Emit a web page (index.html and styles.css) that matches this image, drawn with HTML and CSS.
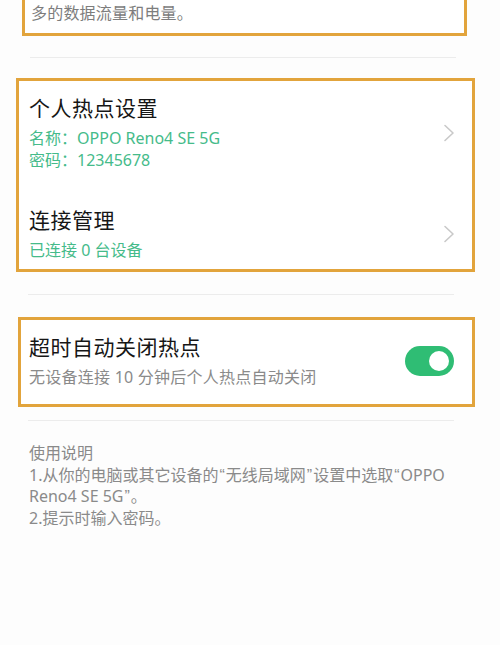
FILE: index.html
```html
<!DOCTYPE html>
<html lang="zh-CN">
<head>
<meta charset="utf-8">
<title>个人热点</title>
<link rel="stylesheet" href="styles.css">
</head>
<body>
<div class="page">
  <div class="box box-top">
    <p class="top-text">多的数据流量和电量。</p>
  </div>
  <div class="divider d1"></div>

  <div class="box box-settings">
    <div class="row row-first">
      <div class="row-text">
        <div class="title">个人热点设置</div>
        <div class="sub green">名称<span class="colon">：</span>OPPO Reno4 SE 5G</div>
        <div class="sub green">密码<span class="colon">：</span>12345678</div>
      </div>
      <svg class="chev" width="12" height="18" viewBox="0 0 12 18"><path d="M2 1.5 L10 9 L2 16.5" fill="none" stroke="#c9c9c9" stroke-width="1.6" stroke-linecap="round" stroke-linejoin="round"/></svg>
    </div>
    <div class="row row-second">
      <div class="row-text">
        <div class="title">连接管理</div>
        <div class="sub green">已连接 0 台设备</div>
      </div>
      <svg class="chev" width="12" height="18" viewBox="0 0 12 18"><path d="M2 1.5 L10 9 L2 16.5" fill="none" stroke="#c9c9c9" stroke-width="1.6" stroke-linecap="round" stroke-linejoin="round"/></svg>
    </div>
  </div>
  <div class="divider d2"></div>

  <div class="box box-toggle">
    <div class="row-text">
      <div class="title">超时自动关闭热点</div>
      <div class="sub grey">无设备连接 10 分钟后个人热点自动关闭</div>
    </div>
    <div class="switch"><span class="knob"></span></div>
  </div>
  <div class="divider d3"></div>

  <div class="notes">
    使用说明<br>
    1.从你的电脑或其它设备的<span class="q">“</span>无线局域网<span class="q">”</span>设置中选取<span class="q">“</span>OPPO<br>
    Reno4 SE 5G<span class="q">”</span>。<br>
    2.提示时输入密码。
  </div>
</div>
</body>
</html>
```
FILE: styles.css
```css
* { box-sizing: border-box; }
html, body { margin: 0; padding: 0; background: #fdfdfd; }
body {
  font-family: "Noto Sans", "Noto Sans CJK SC", sans-serif;
  width: 500px;
  height: 645px;
  overflow: hidden;
}
.page { display: flex; flex-direction: column; }

.box { border: 3px solid #e2a43c; background: #ffffff; }

.box-top {
  margin-left: 22px;
  width: 445px;
  border-top: 0;
  padding: 0 8px 7px 6px;
}
.top-text {
  margin: 0;
  font-size: 16px;
  line-height: 26px;
  color: #7d7d7d;
  letter-spacing: 0.2px;
}

.divider { height: 1px; background: #ececec; }
.d1 { margin: 21px 0 0 30px; width: 426px; }
.d2 { margin: 22px 0 0 28px; width: 426px; }
.d3 { margin: 13px 0 0 28px; width: 426px; }

.box-settings {
  margin: 20px 0 0 16px;
  width: 459px;
  padding: 0 17px 0 10px;
}
.row { display: flex; align-items: center; justify-content: space-between; }
.row-first { padding: 13px 0 17px; }
.row-second { padding: 18px 0 8px; }

.title { font-size: 21px; line-height: 28px; height: 28px; color: #161616; letter-spacing: 0.5px; }
.sub { font-size: 16px; line-height: 22px; height: 22px; white-space: nowrap; }
.title + .sub { margin-top: 5px; }
.green { color: #45bb8a; }
.grey { color: #8a8a8a; letter-spacing: 0.25px; }
.colon { font-family: "Noto Sans CJK TC", sans-serif; line-height: 0; }
.q { font-family: "Liberation Sans", sans-serif; padding: 0 1px; line-height: 0; }

.chev { display: block; }

.box-toggle {
  margin: 22px 0 0 18px;
  width: 457px;
  padding: 13px 18px 16px 8px;
  display: flex;
  align-items: center;
  justify-content: space-between;
}
.switch {
  position: relative;
  width: 49px;
  height: 30px;
  border-radius: 15px;
  background: #2fbd74;
}
.knob {
  position: absolute;
  right: 5px;
  top: 5px;
  width: 20px;
  height: 20px;
  border-radius: 50%;
  background: #ffffff;
}

.notes {
  margin: 22px 0 0 29px;
  font-size: 16px;
  line-height: 21.7px;
  color: #8a8a8a;
}
```
